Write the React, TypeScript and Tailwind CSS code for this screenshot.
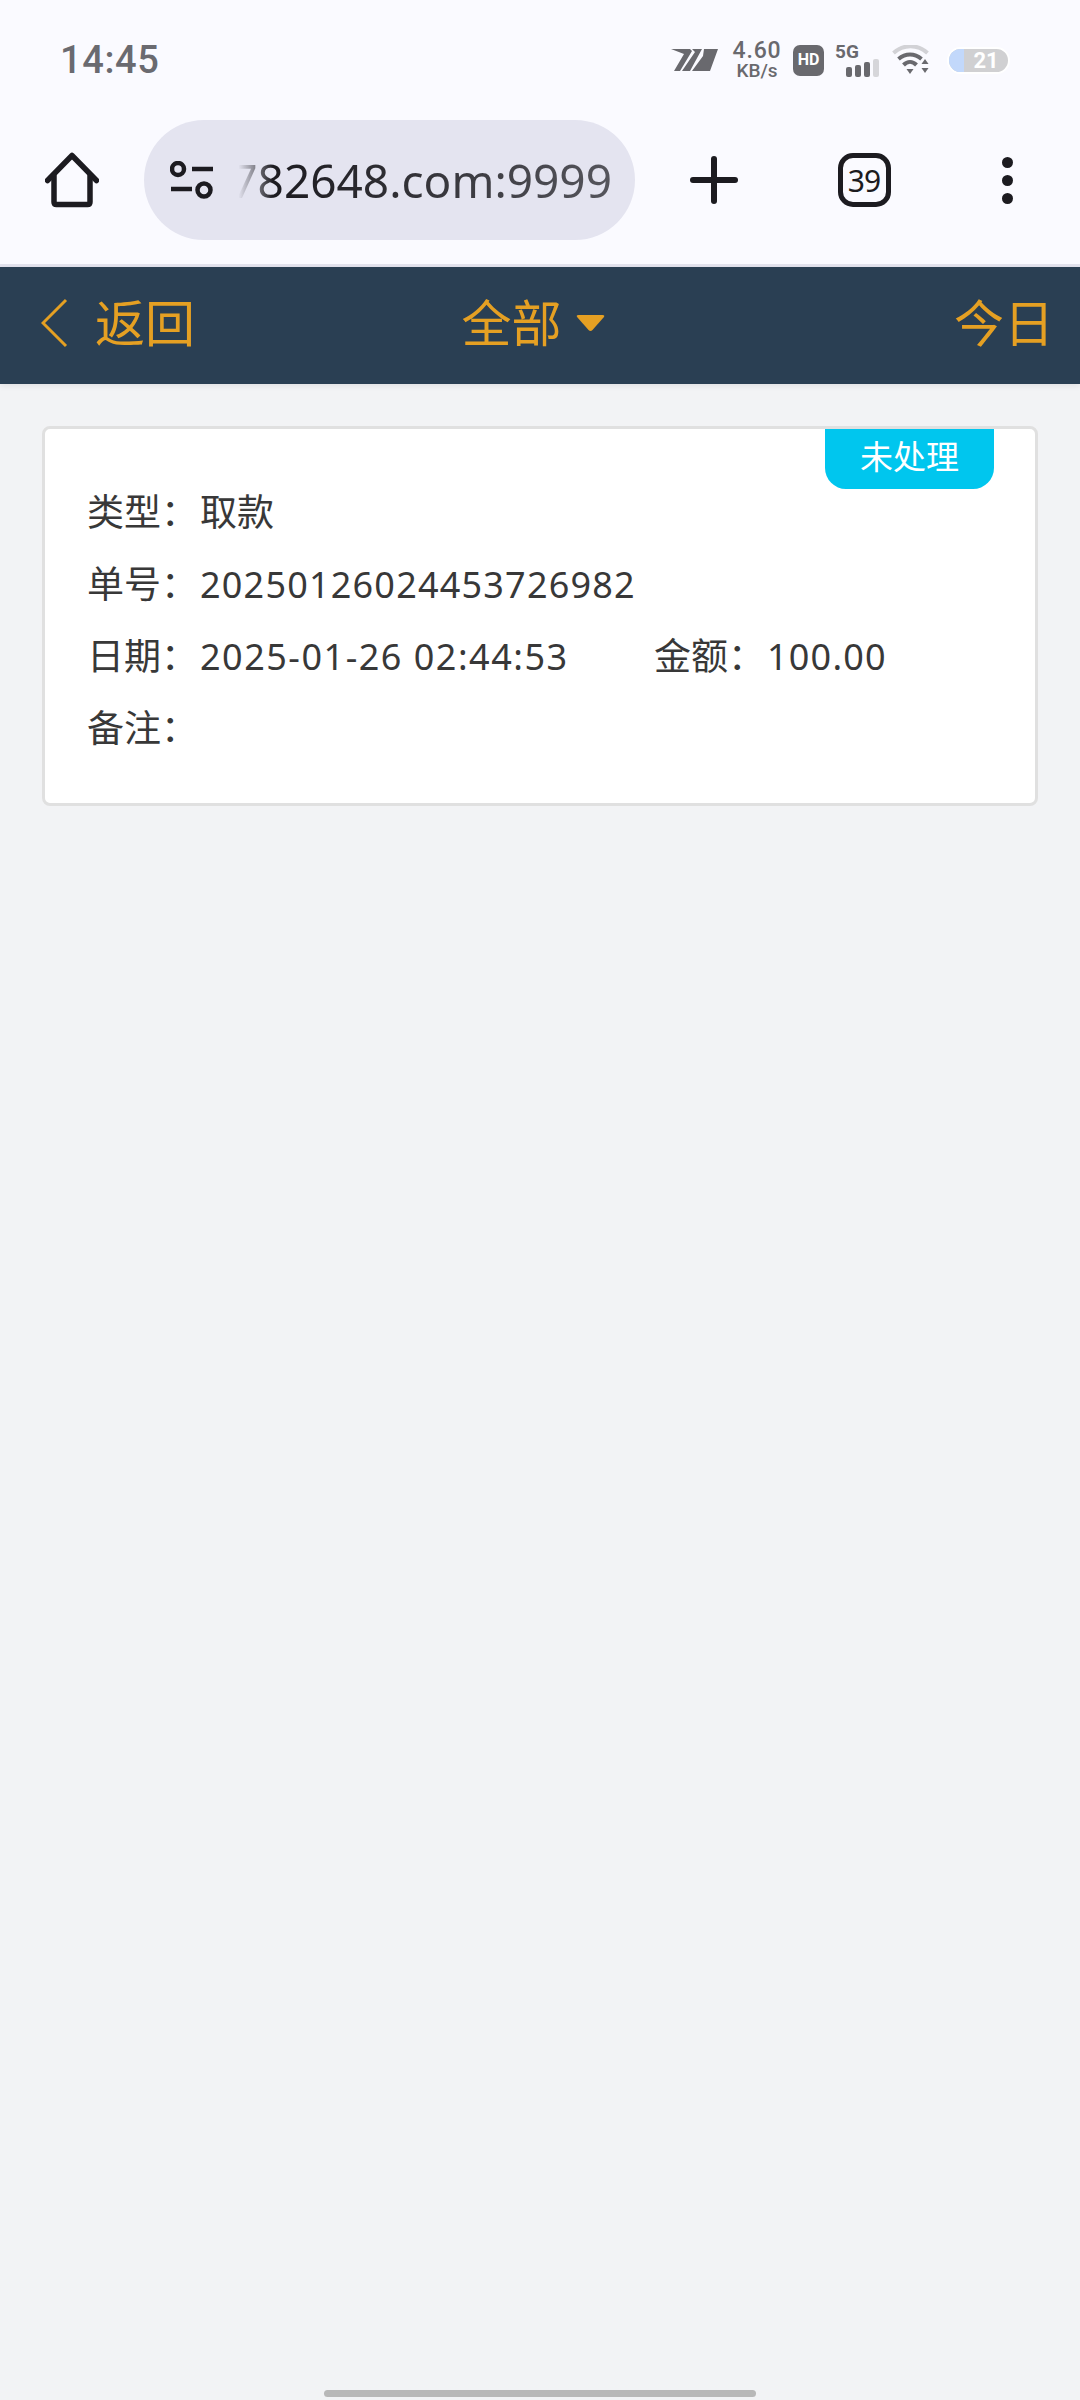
import React from 'react';

const CJK = "font-['Noto_Sans','Noto_Sans_CJK_SC',sans-serif]";
// full-width colon used after every field label
const COLON = '\uFF1A';

function CarrierMark() {
  return (
    <svg width="47" height="24" viewBox="0 0 47 24" fill="#69696e">
      <path d="M0 1 L19 1 L21 3 L9 23 L3 23 L13 6 Z" />
      <path d="M21 1 L31 1 L19 23 L11 23 L24 4 Z" />
      <path d="M33 1 L47 1 L39 23 L21 23 L32 8 Z" />
    </svg>
  );
}

function SignalBars() {
  const bars = [
    { h: 'h-[10px]', c: 'bg-[#69696e]' },
    { h: 'h-[12px]', c: 'bg-[#69696e]' },
    { h: 'h-[15px]', c: 'bg-[#69696e]' },
    { h: 'h-[18px]', c: 'bg-[#d6d6da]' },
  ];
  return (
    <div className="flex items-end gap-[3px]">
      {bars.map((b, i) => (
        <div key={i} className={`w-[6px] rounded-[2px] ${b.h} ${b.c}`} />
      ))}
    </div>
  );
}

function Wifi() {
  return (
    <svg width="38" height="30" viewBox="0 0 37 30" fill="none" strokeLinecap="butt">
      <path d="M1 8 C11 -1 25 -1 35 8" stroke="#d2d2d6" strokeWidth="4" />
      <path d="M6 14 C13 8 22 8 29 14" stroke="#69696e" strokeWidth="4" />
      <path d="M11 20 C15 16 20 16 24 20" stroke="#69696e" strokeWidth="4" />
      <path d="M14 24 L21 24 L17.5 29 Z" fill="#69696e" />
      <path d="M29 19 L36 19 L32.5 14 Z" fill="#69696e" />
      <path d="M29 23 L36 23 L32.5 28 Z" fill="#69696e" />
    </svg>
  );
}

function StatusBar() {
  return (
    <div className="h-[120px] flex items-center justify-between pl-[60px] pr-[70px]">
      <span className="text-[38px] font-medium text-[#6a6a70] font-['Roboto',sans-serif] tracking-[0.6px]">
        14:45
      </span>
      <div className="flex items-center">
        <CarrierMark />
        <div className="ml-[14px] w-[50px] flex flex-col items-center text-[#69696e] font-['Roboto',sans-serif] font-medium">
          <span className="text-[23px] leading-[20px] tracking-[0.8px]">4.60</span>
          <span className="text-[19px] leading-[19px]">KB/s</span>
        </div>
        <div className="ml-[11px] w-[31px] h-[31px] rounded-[7px] bg-[#69696e] flex items-center justify-center text-white text-[16px] font-bold font-['Roboto',sans-serif]">
          HD
        </div>
        <div className="ml-[11px] w-[44px] h-[31px] flex flex-col">
          <span className="text-[19px] leading-[14px] font-bold text-[#69696e] font-['Roboto',sans-serif]">5G</span>
          <div className="self-end">
            <SignalBars />
          </div>
        </div>
        <div className="ml-[13px]">
          <Wifi />
        </div>
        <div className="ml-[17px] w-[63px] h-[27px] rounded-full border-[2px] border-white bg-[#d0d0d2] overflow-hidden flex">
          <div className="w-[15px] bg-[#c2d8fb]" />
          <span className="flex-1 text-center text-white text-[22px] leading-[23px] font-bold font-['Roboto',sans-serif]">
            21
          </span>
        </div>
      </div>
    </div>
  );
}

function Toolbar() {
  return (
    <div className="h-[144px] pb-[24px] flex items-center">
      <div className="w-[144px] flex justify-center">
        <svg width="54" height="56" viewBox="0 0 54 56" fill="none" stroke="#1c1b20" strokeWidth="5.5" strokeLinecap="round" strokeLinejoin="round">
          <path d="M2.5 28.5 L27 3.5 L51.5 28.5" />
          <path d="M9 24 L9 50 Q9 52.5 11.5 52.5 L42.5 52.5 Q45 52.5 45 50 L45 24" />
        </svg>
      </div>
      <div className="w-[491px] h-[120px] rounded-full bg-[#e4e4f0] flex items-center pl-[26px] pr-[23px]">
        <svg className="shrink-0" width="44" height="38" viewBox="0 0 44 38" fill="none" stroke="#1c1b20" strokeWidth="4.5">
          <circle cx="8" cy="8" r="6" />
          <circle cx="34" cy="29" r="6.5" />
          <path d="M22 8 L43 8" />
          <path d="M1 28 L22 28" />
        </svg>
        <div className="ml-[8px] flex-1 min-w-0 flex justify-end overflow-hidden">
          <div className="shrink-0 text-[46px] leading-[60px] whitespace-nowrap font-['Noto_Sans',sans-serif] bg-gradient-to-r from-transparent from-[2%] via-[#1c1b20] via-[11%] to-[#55555c] to-[100%] bg-clip-text text-transparent">
            782648.com:9999
          </div>
        </div>
      </div>
      <div className="w-[158px] flex justify-center">
        <svg width="48" height="48" viewBox="0 0 48 48" stroke="#1c1b20" strokeWidth="6" strokeLinecap="round">
          <path d="M24 3 L24 45" />
          <path d="M3 24 L45 24" />
        </svg>
      </div>
      <div className="w-[142px] flex justify-center">
        <div className="w-[53px] h-[54px] rounded-[15px] border-[5.5px] border-[#1c1b20] flex items-center justify-center text-[#1c1b20] text-[30px] tracking-[-1px] font-['Noto_Sans',sans-serif]">
          39
        </div>
      </div>
      <div className="w-[145px] flex flex-col items-center gap-[7px]">
        <div className="w-[11px] h-[11px] rounded-full bg-[#1c1b20]" />
        <div className="w-[11px] h-[11px] rounded-full bg-[#1c1b20]" />
        <div className="w-[11px] h-[11px] rounded-full bg-[#1c1b20]" />
      </div>
    </div>
  );
}

function NavBar() {
  return (
    <div className={`h-[117px] pb-[6px] bg-[#2a3f53] text-[#e5a023] text-[50px] leading-none flex items-center justify-between pl-[41px] pr-[26px] shadow-[0_2px_6px_rgba(0,0,0,0.08)] ${CJK}`}>
      <div className="w-[330px] flex items-center">
        <svg width="27" height="50" viewBox="0 0 27 50" fill="none" stroke="#e5a023" strokeWidth="3">
          <path d="M25 2 L2 25 L25 48" />
        </svg>
        <span className="ml-[27px]">返回</span>
      </div>
      <div className="flex items-center mr-[28px]">
        <span>全部</span>
        <svg className="ml-[13px]" width="31" height="18" viewBox="0 0 30 18" fill="#e5a023">
          <path d="M3 1 L27 1 Q30 1 28 3.5 L17 16 Q15 18 13 16 L2 3.5 Q0 1 3 1 Z" />
        </svg>
      </div>
      <div className="w-[330px] text-right">今日</div>
    </div>
  );
}

function RecordCard() {
  const digits = 'ml-[2px] text-[36px] tracking-[1.2px]';
  return (
    <div className={`relative mx-[42px] mt-[42px] h-[380px] rounded-[8px] border-[3px] border-[#e0e0e0] bg-white pl-[42px] pt-[47px] text-[37px] leading-[72px] text-[#383838] ${CJK}`}>
      <div className="absolute top-0 right-[41px] w-[169px] h-[60px] rounded-b-[21px] bg-[#00c6ee] text-white text-[33px] leading-[55px] text-center">
        未处理
      </div>
      <div className="h-[72px]">类型{COLON}<span className="ml-[2px]">取款</span></div>
      <div className="h-[72px]">单号{COLON}<span className={digits}>20250126024453726982</span></div>
      <div className="h-[72px] flex">
        <span className="w-[567px]">日期{COLON}<span className="ml-[2px] text-[36px] tracking-[1.5px]">2025-01-26 02:44:53</span></span>
        <span>金额{COLON}<span className={digits}>100.00</span></span>
      </div>
      <div className="h-[72px]">备注{COLON}</div>
    </div>
  );
}

export default function App() {
  return (
    <div className="relative h-[2400px] bg-[#f2f3f5] overflow-hidden">
      <div className="bg-[#fafaff] border-b-[3px] border-[#e3e3ee]">
        <StatusBar />
        <Toolbar />
      </div>
      <NavBar />
      <RecordCard />
      <div className="absolute bottom-[3px] left-[324px] w-[432px] h-[7px] rounded-full bg-[#b8b8b8]" />
    </div>
  );
}
